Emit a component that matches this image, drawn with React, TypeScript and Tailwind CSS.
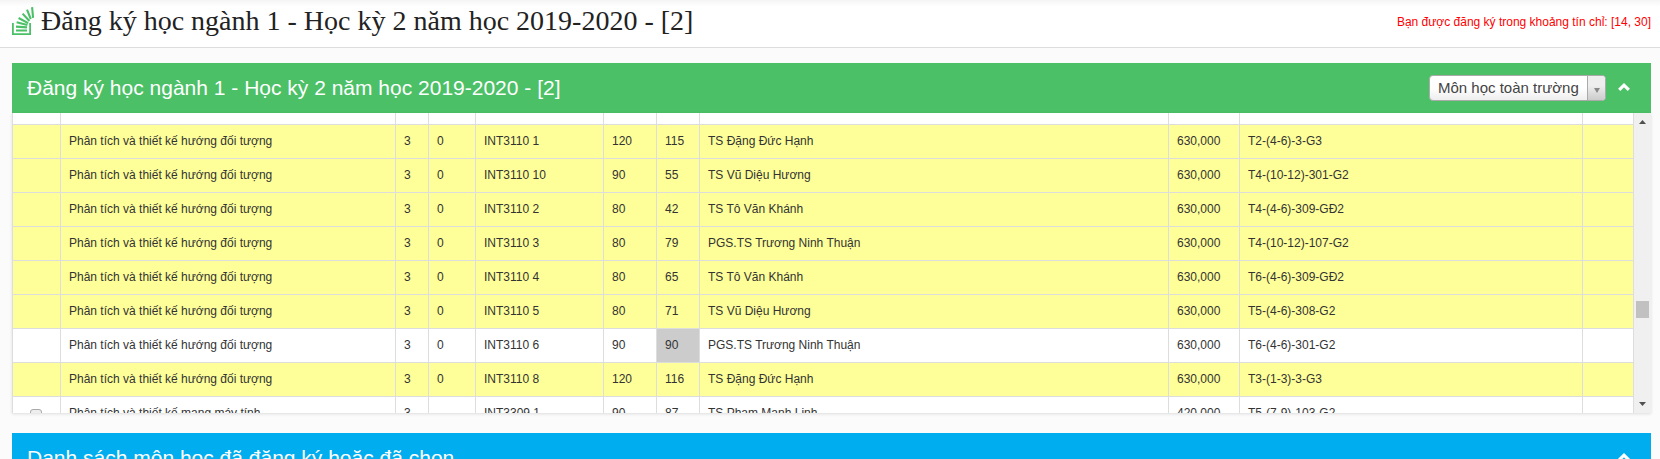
import React from 'react';

type Row = {
  name: string;
  credits: string;
  practice: string;
  code: string;
  capacity: string;
  enrolled: string;
  teacher: string;
  fee: string;
  schedule: string;
  state: 'open' | 'full' | 'selectable';
};

const OOAD = 'Phân tích và thiết kế hướng đối tượng';

const rows: Row[] = [
  { name: OOAD, credits: '3', practice: '0', code: 'INT3110 1', capacity: '120', enrolled: '115', teacher: 'TS Đặng Đức Hạnh', fee: '630,000', schedule: 'T2-(4-6)-3-G3', state: 'open' },
  { name: OOAD, credits: '3', practice: '0', code: 'INT3110 10', capacity: '90', enrolled: '55', teacher: 'TS Vũ Diệu Hương', fee: '630,000', schedule: 'T4-(10-12)-301-G2', state: 'open' },
  { name: OOAD, credits: '3', practice: '0', code: 'INT3110 2', capacity: '80', enrolled: '42', teacher: 'TS Tô Văn Khánh', fee: '630,000', schedule: 'T4-(4-6)-309-GĐ2', state: 'open' },
  { name: OOAD, credits: '3', practice: '0', code: 'INT3110 3', capacity: '80', enrolled: '79', teacher: 'PGS.TS Trương Ninh Thuận', fee: '630,000', schedule: 'T4-(10-12)-107-G2', state: 'open' },
  { name: OOAD, credits: '3', practice: '0', code: 'INT3110 4', capacity: '80', enrolled: '65', teacher: 'TS Tô Văn Khánh', fee: '630,000', schedule: 'T6-(4-6)-309-GĐ2', state: 'open' },
  { name: OOAD, credits: '3', practice: '0', code: 'INT3110 5', capacity: '80', enrolled: '71', teacher: 'TS Vũ Diệu Hương', fee: '630,000', schedule: 'T5-(4-6)-308-G2', state: 'open' },
  { name: OOAD, credits: '3', practice: '0', code: 'INT3110 6', capacity: '90', enrolled: '90', teacher: 'PGS.TS Trương Ninh Thuận', fee: '630,000', schedule: 'T6-(4-6)-301-G2', state: 'full' },
  { name: OOAD, credits: '3', practice: '0', code: 'INT3110 8', capacity: '120', enrolled: '116', teacher: 'TS Đặng Đức Hạnh', fee: '630,000', schedule: 'T3-(1-3)-3-G3', state: 'open' },
  { name: 'Phân tích và thiết kế mạng máy tính', credits: '3', practice: '', code: 'INT3309 1', capacity: '90', enrolled: '87', teacher: 'TS Phạm Mạnh Linh', fee: '420,000', schedule: 'T5-(7-9)-103-G2', state: 'selectable' },
];

const cell = 'border-b border-r border-[#ddd] px-2 py-2 align-top whitespace-nowrap';
const filler = 'h-3 border-b border-r border-[#ddd]';

function StackIcon() {
  return (
    <svg viewBox="0 0 22 28" className="h-7 w-[22px] shrink-0 fill-none stroke-[#4bc067]" aria-hidden="true">
      <path strokeWidth="1.8" d="M.9 16v11.100h17.200V16" />
      <path strokeWidth="2.1" d="M4 23.500h11M4 19.600l11 .8M4.600 15.200l10.800 2.800M6.600 11l9.600 5.200M10.600 6.600l6.800 7.400M15 2.600l3.800 9.400M20.100.2l1 10.600" />
    </svg>
  );
}

function Chevron() {
  return (
    <svg viewBox="0 0 12 8" className="h-2 w-3 fill-none stroke-white" aria-hidden="true">
      <path strokeWidth="3.2" d="M1.200 6.800 6 2.200 10.800 6.800" />
    </svg>
  );
}

function CourseTable() {
  return (
    <div className="flex h-[300px] overflow-hidden bg-white shadow-[0_1px_3px_rgba(0,0,0,0.12)]">
      <div className="min-w-0 flex-1 overflow-hidden">
        <table className="w-full table-fixed border-separate border-spacing-0 border-l border-[#ddd] text-xs leading-[17px] text-[#333]">
          <colgroup>
            <col className="w-12" />
            <col className="w-[335px]" />
            <col className="w-[33px]" />
            <col className="w-[47px]" />
            <col className="w-32" />
            <col className="w-[53px]" />
            <col className="w-[43px]" />
            <col />
            <col className="w-[71px]" />
            <col className="w-[343px]" />
            <col className="w-[51px]" />
          </colgroup>
          <tbody>
            <tr>
              {Array.from({ length: 11 }, (_, i) => (
                <td key={i} className={filler} />
              ))}
            </tr>
            {rows.map((r) => (
              <tr key={r.code} className={r.state === 'open' ? 'bg-[#ffff99]' : 'bg-white'}>
                <td className={cell}>
                  {r.state === 'selectable' && (
                    <input
                      type="checkbox"
                      aria-label={r.code}
                      className="mt-1 ml-[9px] block size-3 appearance-none rounded-[3px] border border-[#a9a9a9] bg-[#eee]"
                    />
                  )}
                </td>
                <td className={cell}>{r.name}</td>
                <td className={cell}>{r.credits}</td>
                <td className={cell}>{r.practice}</td>
                <td className={cell}>{r.code}</td>
                <td className={cell}>{r.capacity}</td>
                <td className={r.state === 'full' ? `${cell} bg-[#ccc]` : cell}>{r.enrolled}</td>
                <td className={cell}>{r.teacher}</td>
                <td className={cell}>{r.fee}</td>
                <td className={cell}>{r.schedule}</td>
                <td className={cell} />
              </tr>
            ))}
          </tbody>
        </table>
      </div>
      <div className="flex w-[17px] flex-col items-center bg-[#f0f0f0] py-[7px]" aria-hidden="true">
        <svg viewBox="0 0 7 4" className="h-1 w-[7px] fill-[#505050]">
          <path d="M0 4 3.500 0 7 4z" />
        </svg>
        <div className="flex-[177]" />
        <div className="h-[17px] w-[13px] bg-[#c1c1c1]" />
        <div className="flex-[84]" />
        <svg viewBox="0 0 7 4" className="h-1 w-[7px] fill-[#505050]">
          <path d="M0 0 3.500 4 7 0z" />
        </svg>
      </div>
    </div>
  );
}

export default function App() {
  return (
    <div className="h-screen overflow-hidden bg-[#fbfbfb] font-['Liberation_Sans',Arial,sans-serif]">
      <header className="flex h-12 items-center justify-between border-b border-[#ddd] bg-white bg-linear-to-b from-[#f5f5f5] to-white to-15% pr-[9px] pl-3">
        <div className="flex items-center gap-[7px] pb-[6px]">
          <StackIcon />
          <h1 className="pt-px font-['Liberation_Serif','Times_New_Roman',serif] text-[28px] leading-8 whitespace-nowrap text-[#222]">
            Đăng ký học ngành 1 - Học kỳ 2 năm học 2019-2020 - [2]
          </h1>
        </div>
        <p className="pb-1 text-xs whitespace-nowrap text-[#ff0000]">Bạn được đăng ký trong khoảng tín chỉ: [14, 30]</p>
      </header>

      <main className="flex flex-col gap-5 pt-[15px] pr-[9px] pl-3">
        <section>
          <div className="flex h-[50px] items-center justify-between bg-[#4bc067] pr-[21px] pl-[15px] text-white">
            <h2 className="text-[21px] whitespace-nowrap">Đăng ký học ngành 1 - Học kỳ 2 năm học 2019-2020 - [2]</h2>
            <div className="flex items-center gap-3">
              <div className="relative">
                <select
                  aria-label="Phạm vi môn học"
                  className="h-[26px] w-[177px] appearance-none rounded border border-[#aaa] bg-white bg-linear-to-t from-[#eee] to-white to-50% pl-2 text-[15px] text-[#444]"
                >
                  <option>Môn học toàn trường</option>
                </select>
                <span className="pointer-events-none absolute top-px right-px flex h-6 w-[18px] items-center justify-center rounded-r-[3px] border-l border-[#aaa] bg-linear-to-t from-[#ccc] to-[#eee] to-60%">
                  <svg viewBox="0 0 6 5" className="mt-1 h-[5px] w-1.5 fill-[#888]" aria-hidden="true">
                    <path d="M0 0h6L3 5z" />
                  </svg>
                </span>
              </div>
              <button type="button" aria-label="Thu gọn" className="pb-0.5">
                <Chevron />
              </button>
            </div>
          </div>
          <CourseTable />
        </section>

        <section>
          <div className="flex h-[50px] items-center justify-between bg-[#00aeef] pr-[21px] pl-[15px] text-white">
            <h2 className="text-[21px] whitespace-nowrap">Danh sách môn học đã đăng ký hoặc đã chọn</h2>
            <button type="button" aria-label="Thu gọn" className="pb-0.5">
              <Chevron />
            </button>
          </div>
        </section>
      </main>
    </div>
  );
}
